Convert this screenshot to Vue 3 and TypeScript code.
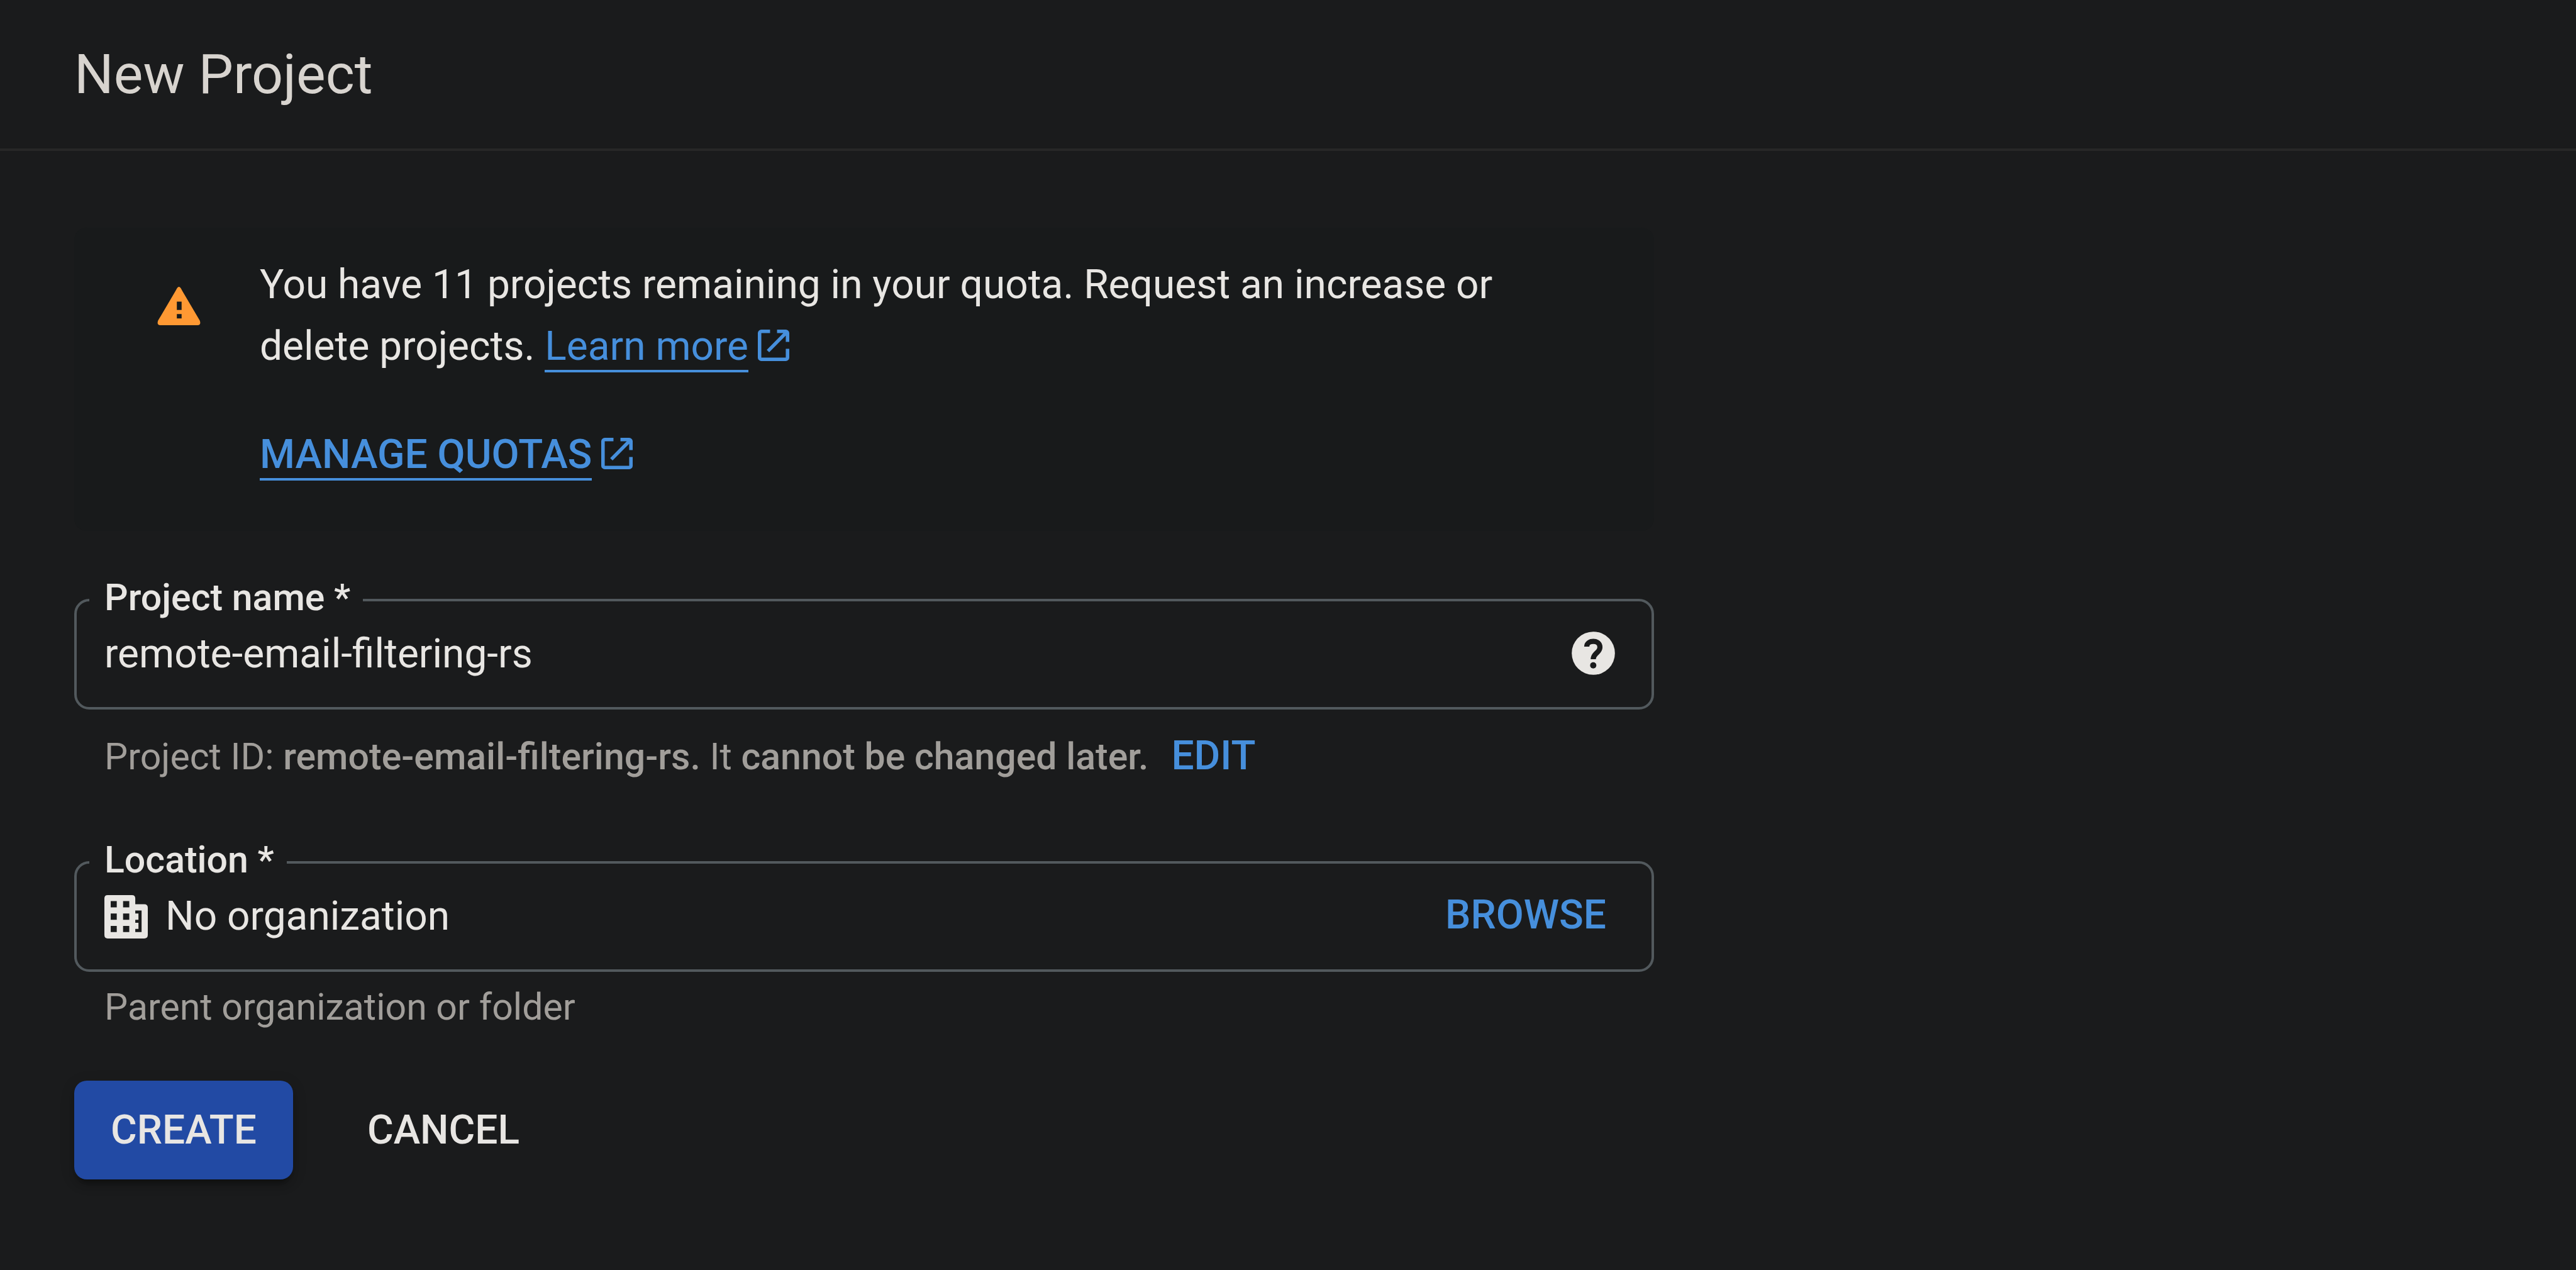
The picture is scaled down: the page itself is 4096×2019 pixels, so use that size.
<script setup lang="ts">
import { ref } from 'vue'

const projectName = ref('remote-email-filtering-rs')
const location = ref('No organization')
const remaining = 11
</script>

<template>
  <div class="page">
    <header class="page-header">
      <h1>New Project</h1>
    </header>

    <main class="content">
      <section class="notice">
        <svg class="warning" viewBox="0 0 78 70" aria-hidden="true">
          <path
            fill-rule="evenodd"
            d="M35.5 2.5Q39 -2.5 42.5 2.5L45.5 8L77 61.5Q80 69.7 73 70H5Q-2 69.7 1 61.5L32.500 8ZM35.200 27V42.300H43.900V27ZM35.200 49.700V57.700H43.900V49.700Z"
          />
        </svg>
        <div class="notice-body">
          <p>
            You have {{ remaining }} projects remaining in your quota. Request an increase or delete projects.
            <a class="link" href="#learn-more"><span class="link-text">Learn more</span><svg class="external" viewBox="3 3 18 18" aria-hidden="true">
              <path d="M10 3H5a2 2 0 0 0-2 2v14a2 2 0 0 0 2 2h14a2 2 0 0 0 2-2v-5h-2v5H5V5h5z" />
              <path d="M14 3v2h3.600L8.100 14.600l1.400 1.400L19 6.400V10h2V5a2 2 0 0 0-2-2z" />
            </svg></a>
          </p>
          <p>
            <a class="link strong" href="#quotas"><span class="link-text">MANAGE QUOTAS</span><svg class="external" viewBox="3 3 18 18" aria-hidden="true">
              <path d="M10 3H5a2 2 0 0 0-2 2v14a2 2 0 0 0 2 2h14a2 2 0 0 0 2-2v-5h-2v5H5V5h5z" />
              <path d="M14 3v2h3.600L8.100 14.600l1.400 1.400L19 6.400V10h2V5a2 2 0 0 0-2-2z" />
            </svg></a>
          </p>
        </div>
      </section>

      <form @submit.prevent>
        <fieldset class="field">
          <legend><label for="project-name">Project name *</label></legend>
          <div class="field-row">
            <input id="project-name" v-model="projectName" type="text" />
            <button class="help" type="button" aria-label="Help">
              <svg class="icon" viewBox="0 0 79 79" aria-hidden="true">
                <circle class="help-disc" cx="39.500" cy="39.500" r="39.300" />
                <path
                  class="help-mark"
                  d="M27.500 27.500C27.500 21.500 32.500 18 39.500 18C46.500 18 51.500 22 51.500 28.500C51.500 34 48 36.500 44.500 40C40.500 44 39.300 46 39.300 50.500"
                />
                <circle class="help-dot" cx="39.300" cy="61.500" r="5.700" />
              </svg>
            </button>
          </div>
        </fieldset>
        <p class="hint hint-id">
          <span>Project ID: <b>remote-email-filtering-rs.</b> It <b>cannot be changed later.</b></span>
          <button class="text-button" type="button">EDIT</button>
        </p>

        <fieldset class="field field-location">
          <legend><label for="location">Location *</label></legend>
          <div class="field-row">
            <svg class="icon building" viewBox="0 0 79 79" aria-hidden="true">
              <path
                fill-rule="evenodd"
                d="M6 0H50Q56.200 0 56.200 6V16.700H72.500Q79 16.700 79 23V72.500Q79 79 72.500 79H6Q0 79 0 72.500V6Q0 0 6 0ZM11.500 11V22.300H22.500V11ZM34 11V22.300H45.300V11ZM11.500 33.500V44.800H22.500V33.500ZM34 33.500V44.800H45.300V33.500ZM11.500 56V67.300H22.500V56ZM34 56V67.300H45.300V56ZM56.200 28V33.500H62V44.800H56.200V50.500H62V61.500H56.200V67.300H67.700V28Z"
              />
            </svg>
            <input id="location" v-model="location" type="text" readonly />
            <button class="text-button browse" type="button">BROWSE</button>
          </div>
        </fieldset>
        <p class="hint hint-location">Parent organization or folder</p>

        <div class="actions">
          <button class="action primary" type="submit">CREATE</button>
          <button class="action" type="button">CANCEL</button>
        </div>
      </form>
    </main>
  </div>
</template>

<style>
body {
  background: #1a1b1c;
}
</style>

<style scoped>
.page {
  min-height: 100vh;
  background: #1a1b1c;
  color: #e8e6e3;
  font-family: Roboto, sans-serif;
  font-size: 64px;
  line-height: 98px;
}

h1,
p {
  margin: 0;
}

button,
input {
  margin: 0;
  padding: 0;
  border: 0;
  background: none;
  color: inherit;
  font: inherit;
}

button {
  cursor: pointer;
}

.page-header {
  padding: 66px 118px;
  border-bottom: 4px solid #272727;
}

h1 {
  color: #d8d4cf;
  font-size: 88px;
  font-weight: 400;
  line-height: 104px;
}

.content {
  box-sizing: border-box;
  max-width: 2748px;
  padding: 122px 118px;
}

.notice {
  display: flex;
  align-items: flex-start;
  gap: 94px;
  padding: 42px 132px 72px;
  border-radius: 20px;
  background: #181a1b;
}

.notice-body {
  display: flex;
  flex-direction: column;
  gap: 74px;
}

.warning {
  flex: none;
  width: 69px;
  height: 61px;
  margin-top: 52px;
  fill: #ff9933;
}

.link {
  color: #468fdc;
  text-decoration: none;
  white-space: nowrap;
}

.link-text {
  border-bottom: 4px solid #468fdc;
}

.strong {
  font-weight: 500;
}

.external {
  width: 50px;
  height: 50px;
  margin-left: 15px;
  vertical-align: -2px;
  fill: #468fdc;
}

.field {
  min-width: 0;
  margin: 76px 0 0;
  padding: 0 20px 32px;
  border: 4px solid #52595d;
  border-radius: 24px;
}

.field-location {
  margin-top: 98px;
}

legend {
  padding: 0 20px 8px 24px;
  font-size: 59px;
  font-weight: 500;
  line-height: 60px;
}

.field-row {
  display: flex;
  align-items: center;
  height: 104px;
  padding: 0 38px 0 24px;
}

.field-row input {
  flex: 1;
  min-width: 0;
  height: 98px;
  outline: 0;
}

.icon {
  display: block;
  width: 69px;
  height: 69px;
}

.help {
  padding-bottom: 4px;
}

.help-disc {
  fill: #e8e6e3;
}

.help-mark {
  fill: none;
  stroke: #1a1b1c;
  stroke-width: 9.4;
}

.help-dot {
  fill: #1a1b1c;
}

.building {
  flex: none;
  margin-right: 28px;
  fill: #e8e6e3;
}

.text-button {
  color: #468fdc;
  font-size: 64px;
  font-weight: 500;
}

.browse {
  padding: 0 14px 4px;
}

.hint {
  display: flex;
  align-items: baseline;
  gap: 36px;
  padding: 0 48px;
  color: #a19e9a;
  font-size: 59px;
  line-height: 72px;
}

.hint b {
  font-weight: 500;
}

.hint-id {
  margin-top: 38px;
}

.hint-location {
  margin-top: 20px;
}

.actions {
  display: flex;
  gap: 60px;
  margin-top: 81px;
}

.action {
  padding: 0 58px;
  border-radius: 20px;
  font-weight: 500;
  line-height: 157px;
}

.primary {
  background: #224aa4;
  box-shadow:
    0 15px 5px -10px rgba(0, 0, 0, 0.2),
    0 10px 10px rgba(0, 0, 0, 0.14),
    0 5px 25px rgba(0, 0, 0, 0.12);
}
</style>
